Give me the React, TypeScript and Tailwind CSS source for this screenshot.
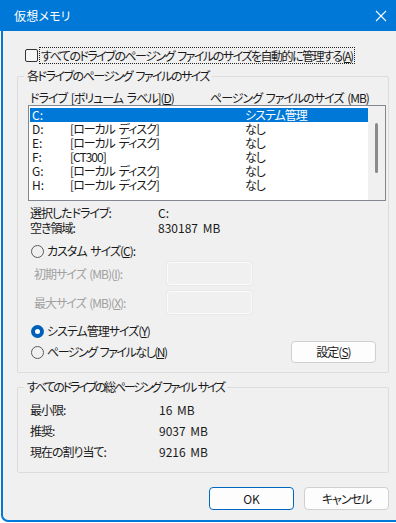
import React from 'react'

const font = "font-['Noto_Sans_CJK_JP','Noto_Sans',sans-serif] [font-feature-settings:'palt'] tracking-[-1px] [word-spacing:2px]"

const drives = [
  { letter: 'C:', label: '', size: 'システム管理', selected: true },
  { letter: 'D:', label: '[ローカル ディスク]', size: 'なし' },
  { letter: 'E:', label: '[ローカル ディスク]', size: 'なし' },
  { letter: 'F:', label: '[CT300]', size: 'なし' },
  { letter: 'G:', label: '[ローカル ディスク]', size: 'なし' },
  { letter: 'H:', label: '[ローカル ディスク]', size: 'なし' },
]

function Radio({ checked }: { checked?: boolean }) {
  if (checked) {
    return (
      <span className="flex h-[13px] w-[13px] items-center justify-center rounded-full bg-[#005fb8]">
        <span className="h-[5px] w-[5px] rounded-full bg-white" />
      </span>
    )
  }
  return <span className="h-[13px] w-[13px] rounded-full border border-[#5c5c5c]" />
}

function GroupBox({
  title,
  className,
  titleClass = '',
  children,
}: {
  title: string
  className: string
  titleClass?: string
  children: React.ReactNode
}) {
  return (
    <div className={`relative w-[372px] rounded-[2px] border border-[#dcdcdc] ${className}`}>
      <span
        className={`absolute left-[6px] top-[-9px] whitespace-nowrap bg-[#f0f0f0] px-[3px] text-[12px] leading-[16px] ${titleClass}`}
      >
        {title}
      </span>
      {children}
    </div>
  )
}

export default function App() {
  return (
    <div className={`h-[523px] w-[396px] overflow-hidden whitespace-nowrap bg-white text-[12px] text-[#1a1a1a] ${font}`}>
      <div className="ml-[1px] flex h-[522px] flex-col rounded-bl-[7px] border-b-2 border-l-2 border-[#0078d7] bg-[#f0f0f0]">
        {/* title bar */}
        <div className="-ml-[3px] flex h-[31px] shrink-0 items-center justify-between bg-[#0078d7] pl-[14px] pr-[8px] text-white">
          <span className="text-[12px] leading-none tracking-[0.2px]">仮想メモリ</span>
          <svg width="12" height="12" viewBox="0 0 12 12" className="mr-[1px]">
            <path d="M1 1 L11 11 M11 1 L1 11" stroke="white" strokeWidth="1.1" fill="none" />
          </svg>
        </div>

        <div className="flex flex-col pl-[14px]">
          {/* auto manage checkbox */}
          <div className="mt-[15px] flex h-[18px] items-center pl-[8px]">
            <span className="h-[13px] w-[13px] shrink-0 rounded-[2px] border border-[#333] bg-[#f7f7f7]" />
            <span className="ml-[1px] border border-dotted border-[#222] px-[1px] leading-[15px] tracking-[-1.5px]">
              すべてのドライブのページング ファイルのサイズを自動的に管理する(<u>A</u>)
            </span>
          </div>

          <GroupBox title="各ドライブのページング ファイルのサイズ" className="mt-[12px] h-[297px]" titleClass="tracking-[-1.5px]">
            <div className="flex flex-col">
              <div className="mt-[13px] flex h-[15px] items-center leading-[15px]">
                <span className="ml-[12px] w-[180px]">ドライブ [ボリューム ラベル](<u>D</u>)</span>
                <span>ページング ファイルのサイズ (MB)</span>
              </div>

              <div className="ml-[10px] flex h-[96px] w-[358px] border border-[#828790] bg-white">
                <div className="flex flex-1 flex-col pl-[1px] pt-[2px]">
                  {drives.map((d) => (
                    <div
                      key={d.letter}
                      className={`flex h-[14px] items-center leading-[14px] ${d.selected ? 'bg-[#0078d7] text-white' : ''}`}
                    >
                      <span className="w-[40px] pl-[2px] tracking-normal">{d.letter}</span>
                      <span className="w-[175px]">{d.label}</span>
                      <span>{d.size}</span>
                    </div>
                  ))}
                </div>
                <div className="flex w-[17px] justify-center bg-[#f0f0f0] pt-[17px]">
                  <span className="h-[50px] w-[3px] rounded-full bg-[#8a8a8a]" />
                </div>
              </div>

              <div className="ml-[12px] mt-[4px] flex h-[15px] items-center">
                <span className="w-[128px]">選択したドライブ:</span>
                <span className="tracking-normal">C:</span>
              </div>
              <div className="ml-[12px] flex h-[15px] items-center">
                <span className="w-[128px]">空き領域:</span>
                <span className="tracking-normal">830187 MB</span>
              </div>

              <div className="ml-[13px] mt-[8px] flex h-[16px] items-center gap-[3px]">
                <Radio />
                <span>カスタム サイズ(<u>C</u>):</span>
              </div>

              <div className="ml-[16px] mt-[3px] flex h-[23px] items-center text-[#a0a0a0]">
                <span className="w-[133px]">初期サイズ (MB)(<u>I</u>):</span>
                <span className="h-[23px] w-[85px] rounded-[3px] border border-[#fbfbfb] bg-[#f0f0f0] shadow-[0_0_0_1px_#e9e9e9]" />
              </div>
              <div className="ml-[16px] mt-[6px] flex h-[23px] items-center text-[#a0a0a0]">
                <span className="w-[133px]">最大サイズ (MB)(<u>X</u>):</span>
                <span className="h-[23px] w-[85px] rounded-[3px] border border-[#fbfbfb] bg-[#f0f0f0] shadow-[0_0_0_1px_#e9e9e9]" />
              </div>

              <div className="ml-[13px] mt-[9px] flex h-[16px] items-center gap-[3px]">
                <Radio checked />
                <span>システム管理サイズ(<u>Y</u>)</span>
              </div>
              <div className="ml-[13px] mt-[2px] flex h-[22px] items-center">
                <Radio />
                <span className="ml-[3px] flex-1 tracking-[-1.5px]">ページング ファイルなし(<u>N</u>)</span>
                <button className="mr-[12px] h-[22px] w-[85px] rounded-[4px] border border-[#d0d0d0] bg-[#fdfdfd] text-[12px]">
                  設定(<u>S</u>)
                </button>
              </div>
            </div>
          </GroupBox>

          <GroupBox
            title="すべてのドライブの総ページング ファイル サイズ"
            className="mt-[14px] h-[86px]"
            titleClass="tracking-[-2.2px]"
          >
            <div className="flex flex-col pt-[11px]">
              <div className="ml-[12px] flex h-[21px] items-center">
                <span className="w-[129px]">最小限:</span>
                <span className="tracking-normal">16 MB</span>
              </div>
              <div className="ml-[12px] flex h-[21px] items-center">
                <span className="w-[129px]">推奨:</span>
                <span className="tracking-normal">9037 MB</span>
              </div>
              <div className="ml-[12px] flex h-[21px] items-center">
                <span className="w-[129px]">現在の割り当て:</span>
                <span className="tracking-normal">9216 MB</span>
              </div>
            </div>
          </GroupBox>

          <div className="mt-[14px] flex w-[372px] justify-end gap-[10px]">
            <button className="h-[23px] w-[85px] rounded-[4px] border border-[#0067c0] bg-[#fdfdfd] text-[12px] tracking-normal">
              OK
            </button>
            <button className="h-[23px] w-[85px] rounded-[4px] border border-[#d0d0d0] bg-[#fdfdfd] text-[12px]">キャンセル</button>
          </div>
        </div>
      </div>
    </div>
  )
}
